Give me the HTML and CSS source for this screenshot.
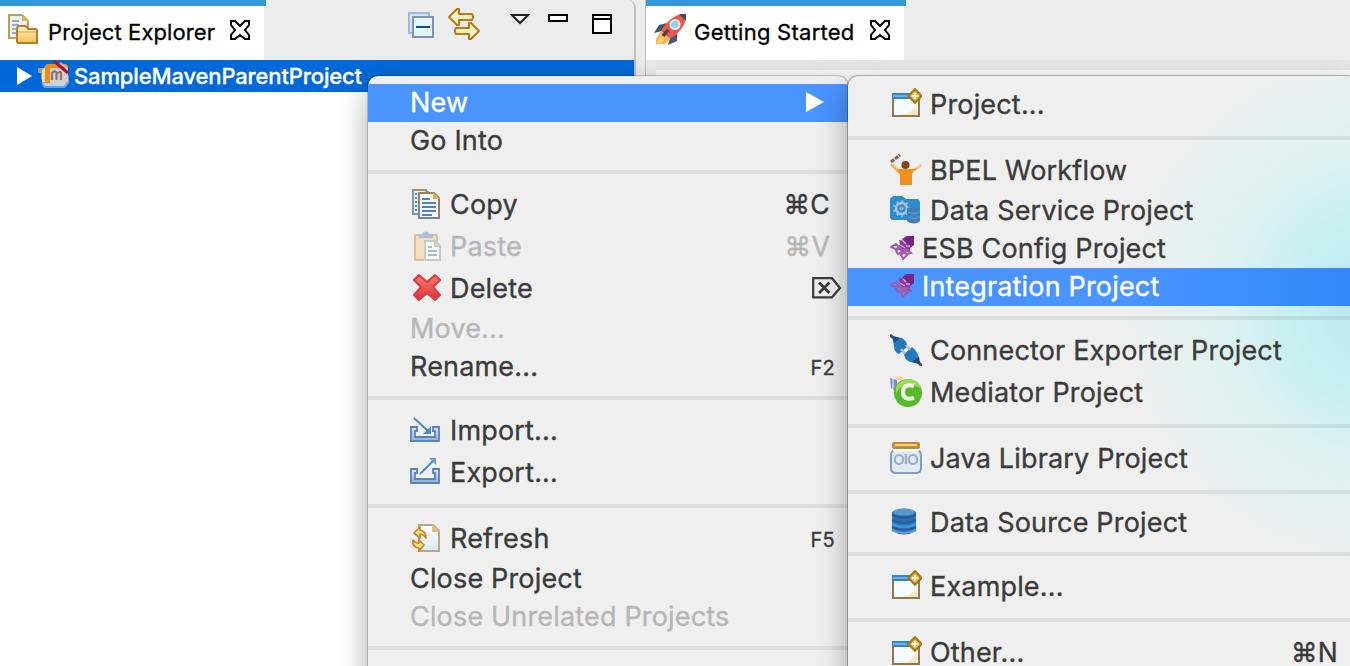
FILE: index.html
```html
<!DOCTYPE html>
<html lang="en">
<head>
<meta charset="utf-8">
<title>Project Explorer</title>
<link rel="stylesheet" href="styles.css">
</head>
<body>
<svg class="defs" width="0" height="0">
  <defs>
    <linearGradient id="gold" x1="0" y1="0" x2="0" y2="1"><stop offset="0" stop-color="#fff3c4"/><stop offset="1" stop-color="#f8c05a"/></linearGradient>
    <linearGradient id="red" x1="0" y1="0" x2="0" y2="1"><stop offset="0" stop-color="#fb7c6c"/><stop offset="1" stop-color="#e0303a"/></linearGradient>
    <linearGradient id="paper" x1="0" y1="0" x2="0" y2="1"><stop offset="0" stop-color="#fdfdfd"/><stop offset="1" stop-color="#dce9f8"/></linearGradient>
    <linearGradient id="tray" x1="0" y1="0" x2="0" y2="1"><stop offset="0" stop-color="#dfeaf6"/><stop offset="1" stop-color="#8fadd6"/></linearGradient>
    <symbol id="close" viewBox="0 0 20 20"><path d="M1 1H5L10 6L15 1H19V5L15 10L19 15V19H15L10 15L5 19H1V15L5 10L1 5Z" fill="#fff" stroke="#000" stroke-width="2"/></symbol>
    <symbol id="wizard" viewBox="0 0 32 32">
      <rect x="3" y="6" width="26" height="22" fill="#f4fbff" stroke="#8e7a50" stroke-width="2"/>
      <path d="M9 27Q25 26 27 14V27Z" fill="#fbe9bd"/>
      <path d="M2 5H23V11H2Z" fill="#3a83bd"/><path d="M3 7H20V9H3Z" fill="#69b2e4"/>
      <path d="M25 1.400L31.200 8L25 14.600L18.500 8Z" fill="#fff5c2" stroke="#a8780f" stroke-width="2.400"/>
      <path d="M25 3.500V12.500M20.500 8H29.500" stroke="#c39a35" stroke-width="3"/><path d="M25 4.500V11.500M21.500 8H28.500" stroke="#fff6cc" stroke-width="2"/>
    </symbol>
    <symbol id="esb" viewBox="0 0 24 24">
      <path d="M12 3L17 0H24V9L20 12Z" fill="#762584"/>
      <path d="M9 4L15 5L20 10V17L15 15L13 17L7 11L10 9Z" fill="#8e3a9b"/>
      <path d="M1 11L6 8L10 12L5 13ZM6 15L10 12L12 16L8 18ZM11 19L14 16L17 19L13 23ZM13 14L18 14L21 17L17 18Z" fill="none" stroke="#a45ab0" stroke-width="2"/>
      <path d="M13 5L16 8M10 9L15 12M16 10L20 10" stroke="#d4a8dc" stroke-width="1.300"/>
    </symbol>
  </defs>
</svg>

<div class="workbench">
  <section class="explorer">
    <header class="tabbar">
      <div class="tab tab-explorer">
        <svg class="i32" viewBox="0 0 32 32">
          <path d="M1 1H14L20 7V24H1Z" fill="#f0f3ec" stroke="#b6a05e" stroke-width="2"/>
          <path d="M14 1V7H20Z" fill="#dfb462"/>
          <path d="M4 7H11M4 11H11M4 15H9M4 19H9" stroke="#8fb1d2" stroke-width="2"/>
          <path d="M9 28V15Q9 12 12 12H17Q19 12 20 15H27Q29 15 29 17V29H10Z" fill="url(#gold)" stroke="#b27c2e" stroke-width="2"/>
          <path d="M10 18H28" stroke="#d9a550" stroke-width="1"/>
        </svg>
        <span class="tab-title">Project Explorer</span>
        <svg class="i20"><use href="#close"/></svg>
      </div>
      <div class="toolbar">
        <svg width="26" height="26" viewBox="0 0 26 26"><rect x="1" y="1" width="20" height="20" fill="#cfe5f3" stroke="#9fb9cf" stroke-width="2"/><rect x="5" y="5" width="20" height="20" fill="#e5f5fc" stroke="#7f93b3" stroke-width="2"/><path d="M8 15H22" stroke="#0b4b90" stroke-width="2"/></svg>
        <svg class="link" width="32" height="32" viewBox="0 0 32 32"><g fill="#fff1c2" stroke="#b87a14" stroke-width="2" stroke-linejoin="round"><path d="M1 9L9 1H11V6H24L25 8V10L24 12H11V17H9Z"/><path d="M31 23L23 15H21V20H8L7 22V24L8 26H21V31H23Z"/></g></svg>
        <svg class="view-menu" width="20" height="12" viewBox="0 0 20 12"><path d="M2 2H18L10 10Z" fill="#fff" stroke="#222" stroke-width="2"/></svg>
        <svg class="minimize" width="20" height="8" viewBox="0 0 20 8"><rect x="1" y="1" width="18" height="6" fill="#fff" stroke="#000" stroke-width="2"/></svg>
        <svg class="maximize" width="20" height="20" viewBox="0 0 20 20"><rect x="1" y="1" width="18" height="18" fill="#fff" stroke="#000" stroke-width="2"/><path d="M1 5H19" stroke="#000" stroke-width="2"/></svg>
      </div>
    </header>
    <div class="tree">
      <div class="tree-row">
        <svg class="twisty" width="15" height="18" viewBox="0 0 15 18"><path d="M0 0L15 9L0 18Z" fill="#fff"/></svg>
        <svg class="i32" viewBox="0 0 32 32">
          <path d="M0 8H8V24L3 19V13H0Z" fill="#a99a85"/>
          <path d="M3 23L8 19H27L31 15V23L27 28H6Z" fill="#6f9fe0"/><path d="M5 23H28L26 26H7Z" fill="#b9d4f5"/>
          <path d="M4 10L8 6H11V22H4Z" fill="#f6dd9c"/>
          <rect x="7" y="4" width="23" height="19" rx="3" fill="#e98b1d"/><path d="M12 8H30V20Q30 23 27 23H12Z" fill="#d8cfc9"/>
          <path d="M14 20V12M14 13Q18 9 18.500 14V20M18.500 14Q23 10 23 14V20" fill="none" stroke="#8b7378" stroke-width="2.200"/>
          <path d="M16 1L30 13" stroke="#ad1237" stroke-width="3"/><path d="M22 3L29 8" stroke="#e8b5b8" stroke-width="2"/>
        </svg>
        <span class="tree-label">SampleMavenParentProject</span>
      </div>
    </div>
  </section>
  <section class="editor">
    <header class="tabbar">
      <div class="tab tab-editor">
        <svg class="i32" viewBox="0 0 32 32">
          <path d="M0 19L5 11L13 9L8 17ZM14 31L23 27V18L16 24Z" fill="#43566f"/>
          <path d="M8 15Q17 2 27 0L32 0V5Q29 17 16 25L7 17Z" fill="#e9574e"/>
          <path d="M25 0H32V7Z" fill="#384960"/>
          <path d="M7 17L16 25L11 30L2 30L2 25Z" fill="#f7b64c"/><path d="M5 24L11 21L9 28L3 29Z" fill="#fbd173"/>
          <path d="M9 22L14 16" stroke="#563c49" stroke-width="3.500"/>
          <circle cx="21" cy="10.500" r="4.600" fill="#89d4ed" stroke="#e7e8e8" stroke-width="2"/>
        </svg>
        <span class="tab-title">Getting Started</span>
        <svg class="i20"><use href="#close"/></svg>
      </div>
    </header>
    <div class="editor-body"></div>
  </section>
</div>

<nav class="menu context-menu">
  <div class="item selected"><span class="label">New</span><svg class="arrow" width="18" height="20" viewBox="0 0 18 20"><path d="M0 0L18 10L0 20Z" fill="#fff"/></svg></div>
  <div class="item"><span class="label">Go Into</span></div>
  <div class="separator"></div>
  <div class="item tall">
    <svg class="i32" viewBox="0 0 32 32"><path d="M3 2H15L18 4V26H3Z" fill="#e4eff6" stroke="#7d9ba8" stroke-width="2"/><path d="M2 2H17" stroke="#a8935c" stroke-width="2"/><path d="M5 6H7M5 10H7M5 14H7M5 18H7M5 22H7" stroke="#5a83b8" stroke-width="2"/><path d="M9 5H24L29 10V30H9Z" fill="#f5faff" stroke="#937f58" stroke-width="2"/><path d="M9 14V30H29" fill="none" stroke="#74879a" stroke-width="2"/><path d="M23 4V11H30Z" fill="#e9ad58"/><path d="M12 11H20M12 15H26M12 19H26M12 23H26M12 27H22" stroke="#557fb8" stroke-width="2"/></svg>
    <span class="label">Copy</span><span class="key">⌘C</span></div>
  <div class="item tall disabled">
    <svg class="i32 faded" viewBox="0 0 32 32"><rect x="5" y="5" width="22" height="25" rx="1" fill="#f3d18f" stroke="#c4924b" stroke-width="2"/><path d="M9 8V4H12Q16-1 20 4H23V8Z" fill="#7390b3"/><path d="M15 11H25L30 16V30H15Z" fill="#fafcff" stroke="#9ca6b0" stroke-width="2"/><path d="M24 11V17H30Z" fill="#c1ad82"/><path d="M18 17H22M18 21H27M18 25H27" stroke="#6b86ae" stroke-width="2"/></svg>
    <span class="label">Paste</span><span class="key">⌘V</span></div>
  <div class="item tall">
    <svg class="i32" viewBox="0 0 32 32"><path d="M9 3L17 10L25 3L30 8L23 15L30 23L25 28L17 21L9 28L4 23L11 15L4 8Z" fill="url(#red)" stroke="#d53f44" stroke-width="2" stroke-linejoin="round"/></svg>
    <span class="label">Delete</span><svg class="delete-key" width="30" height="22" viewBox="0 0 30 22"><path d="M1.200 1.200H20L28 11L20 20.300H1.200Z" fill="none" stroke="#3b3b3b" stroke-width="2.200"/><path d="M7 5.500L17.500 16M17.500 5.500L7 16" stroke="#3b3b3b" stroke-width="2.800"/></svg></div>
  <div class="item disabled"><span class="label">Move...</span></div>
  <div class="item"><span class="label">Rename...</span><span class="key small">F2</span></div>
  <div class="separator"></div>
  <div class="item tall">
    <svg class="i32" viewBox="0 0 32 32"><path d="M1 13H7V17H5V23H25V17H23V13H29V27H1Z" fill="url(#tray)" stroke="#5c82b4" stroke-width="1.800"/><path d="M4 4L18 17" stroke="#4e8cba" stroke-width="2"/><path d="M21 12V20H13Z" fill="#4e8cba"/></svg>
    <span class="label">Import...</span></div>
  <div class="item tall">
    <svg class="i32" viewBox="0 0 32 32"><path d="M1 13H7V17H5V23H25V17H23V13H29V27H1Z" fill="url(#tray)" stroke="#5c82b4" stroke-width="1.800"/><path d="M10 18L23 5" stroke="#4e8cba" stroke-width="2"/><path d="M19 2H26V9Z" fill="#6b9dcb"/></svg>
    <span class="label">Export...</span></div>
  <div class="separator"></div>
  <div class="item tall">
    <svg class="i32" viewBox="0 0 32 32"><path d="M9 3H23L29 9V29H9Z" fill="url(#paper)" stroke="#b9a782" stroke-width="2"/><path d="M22 2V10H30Z" fill="#dcc08a"/><g fill="#ffe08c" stroke="#c5871f" stroke-width="1.700" stroke-linejoin="round"><path d="M4 11L10 5V8Q16 9 16 16Q13 12 10 12V16Z"/><path d="M14 23L9 29V26Q2 25 3 18Q6 22 9 21V18Z"/></g></svg>
    <span class="label">Refresh</span><span class="key small">F5</span></div>
  <div class="item"><span class="label">Close Project</span></div>
  <div class="item disabled"><span class="label">Close Unrelated Projects</span></div>
  <div class="separator"></div>
</nav>

<nav class="menu submenu">
  <div class="item tall"><svg class="i32"><use href="#wizard"/></svg><span class="label">Project...</span></div>
  <div class="separator"></div>
  <div class="item tall">
    <svg class="i32 bpel" viewBox="0 0 32 32"><path d="M1 9L10 2" stroke="#80604a" stroke-width="3" stroke-dasharray="4 1"/><path d="M1 11L10 20L20 20L31 12" fill="none" stroke="#e6a64a" stroke-width="2.500"/><path d="M2 10L9 17M26 15L31 12" stroke="#f2d5a2" stroke-width="2"/><path d="M7 16H24L22 20V33H10V20Z" fill="#f28f1b"/><circle cx="15.500" cy="12" r="4" fill="#814516"/></svg>
    <span class="label">BPEL Workflow</span></div>
  <div class="item">
    <svg class="i32" viewBox="0 0 32 32"><path d="M0 5L3 2H12L16 5H27Q30 5 30 9V26H3Q0 26 0 22Z" fill="#2f8dcb"/><circle cx="11.500" cy="14.500" r="5.500" fill="none" stroke="#a9c7df" stroke-width="2.500"/><circle cx="11.500" cy="14.500" r="7.500" fill="none" stroke="#a9c7df" stroke-width="1.500" stroke-dasharray="2 3"/><circle cx="11.500" cy="14.500" r="2" fill="#8fb5d6"/><path d="M17 14Q24 11 30 14V27Q24 32 17 27Z" fill="#3d7fbe"/><path d="M18 18Q24 21 30 18M18 23Q24 26 30 23" fill="none" stroke="#5a9ccf" stroke-width="1.300"/></svg>
    <span class="label">Data Service Project</span></div>
  <div class="item"><svg class="i24"><use href="#esb"/></svg><span class="label">ESB Config Project</span></div>
  <div class="item selected tinted"><svg class="i24"><use href="#esb"/></svg><span class="label">Integration Project</span></div>
  <div class="separator"></div>
  <div class="item tall">
    <svg class="i32" viewBox="0 0 32 32"><path d="M0 1L5 5M27 27L32 32" stroke="#4d535b" stroke-width="3"/><path d="M2 2L12 4Q18 8 17 13L9 20Q4 18 4 12Z" fill="#2379ba"/><path d="M2 2L9 4L5 9Z" fill="#25437a"/><path d="M14 20L22 13Q29 18 30 30L20 28Q14 25 14 20Z" fill="#2379ba"/><path d="M30 30L22 28L29 23Z" fill="#25437a"/><path d="M11 15L15 20M16 11L20 16" stroke="#b9babb" stroke-width="2.500"/></svg>
    <span class="label">Connector Exporter Project</span></div>
  <div class="item tall">
    <svg class="i32" viewBox="0 0 32 32"><path d="M4 2L10 0L15 2L9 4Z" fill="#fbd28d"/><path d="M0 2L7 4V16L1 12Z" fill="#7c91c4"/><path d="M3 3V13" stroke="#b6c3e3" stroke-width="2"/><circle cx="18" cy="17" r="14" fill="#58b82c"/><path d="M6 11Q12 1 24 4Q31 8 31 13Q24 7 17 9Q9 10 6 18Z" fill="#9adc55"/><path d="M24 10Q13 7 13 16Q13 25 24 22" fill="none" stroke="#f2fae9" stroke-width="4"/></svg>
    <span class="label">Mediator Project</span></div>
  <div class="separator"></div>
  <div class="item tall">
    <svg class="i32" viewBox="0 0 32 32"><path d="M4 8Q1 10 1 14V26Q1 31 6 31H26Q31 31 31 26V14Q31 10 28 8Z" fill="#e1e9f3" stroke="#829dc4" stroke-width="2"/><rect x="2" y="0" width="28" height="7" rx="2" fill="#c58a2c"/><path d="M5 3H27" stroke="#f5d681" stroke-width="2"/><path d="M3 8H29" stroke="#fff" stroke-width="2"/><rect x="5" y="13" width="8" height="9" rx="4" fill="none" stroke="#9bafca" stroke-width="2.200"/><path d="M16 12V22" stroke="#9bafca" stroke-width="2.500"/><rect x="19" y="13" width="8" height="9" rx="4" fill="none" stroke="#9bafca" stroke-width="2.200"/></svg>
    <span class="label">Java Library Project</span></div>
  <div class="separator"></div>
  <div class="item">
    <svg class="i32 db" viewBox="0 0 32 32"><path d="M2 6Q14-1 26 6V25Q14 32 2 25Z" fill="#2f70b3"/><ellipse cx="14" cy="6" rx="11" ry="3.500" fill="#5b96d2"/><path d="M2 18Q14 24 26 18" fill="none" stroke="#2f9ae0" stroke-width="3"/><path d="M2 24Q14 30 26 24" fill="none" stroke="#5b97cf" stroke-width="2.500"/><path d="M2 9Q14 15 26 9M2 14Q14 20 26 14M2 21Q14 27 26 21" fill="none" stroke="#235b98" stroke-width="1.500"/></svg>
    <span class="label">Data Source Project</span></div>
  <div class="separator"></div>
  <div class="item tall"><svg class="i32"><use href="#wizard"/></svg><span class="label">Example...</span></div>
  <div class="separator"></div>
  <div class="item tall"><svg class="i32"><use href="#wizard"/></svg><span class="label">Other...</span><span class="key">⌘N</span></div>
</nav>
</body>
</html>
```
FILE: styles.css
```css
* { box-sizing: border-box; }
html, body { margin: 0; height: 666px; overflow: hidden; }
body { position: relative; width: 1350px; background: #ececec; font-family: Inter, "Liberation Sans", sans-serif; color: #3b3b3b; }
svg { display: block; flex: none; }
.defs { position: absolute; }
.i32 { width: 32px; height: 32px; }
.i24 { width: 24px; height: 24px; }
.i20 { width: 20px; height: 20px; }

.workbench { display: flex; gap: 9px; height: 666px; }
.explorer { width: 636px; border-right: 2px solid #bebebe; border-top-right-radius: 8px; }
.editor { flex: 1; border-left: 1px solid #bebebe; }
.tabbar { display: flex; height: 60px; }
.tab { display: flex; align-items: center; height: 60px; padding: 0 0 0 8px; background: linear-gradient(#3498db, #3498db) 0 0 / 100% 6px no-repeat, linear-gradient(#fff, #fff) 0 0 / calc(100% - 2px) 100% no-repeat; color: #000; }
.tab-explorer { width: 266px; }
.tab-editor { width: 260px; }
.tab-title { font-size: 22px; letter-spacing: 0.1px; white-space: nowrap; width: 168px; margin: 4px 14px 0 8px; -webkit-text-stroke: 0.3px currentColor; }
.tab-editor .tab-title { width: 161px; letter-spacing: 0.25px; margin-right: 15px; }
.tab .i20 { margin-top: 0; }
.toolbar { display: flex; padding-left: 142px; }
.toolbar svg { margin-top: 12px; }
.toolbar .link { margin: 8px 0 0 14px; }
.toolbar .view-menu { margin: 13px 0 0 30px; }
.toolbar .minimize { margin: 14px 0 0 18px; }
.toolbar .maximize { margin: 14px 0 0 24px; }
.tree { height: 606px; background: #fff; }
.tree-row { display: flex; align-items: center; height: 32px; padding-left: 17px; background: #0069d9; color: #fff; }
.tree-row .i32 { margin: 0 4px 0 6px; }
.tree-label { font-size: 22px; font-weight: 500; letter-spacing: -0.14px; white-space: nowrap; -webkit-text-stroke: 0.3px currentColor; }
.editor-body { height: 606px; margin-left: 10px; border-top: 10px solid #e6e6e6; background: #f8f8f8; }

.menu { position: absolute; top: 76px; padding-top: 8px; background-color: #efefef; border-radius: 10px; }
.context-menu { left: 368px; width: 480px; height: 620px; box-shadow: 0 0 0 1px rgba(0,0,0,.2), 0 12px 30px rgba(0,0,0,.34); overflow: hidden; }
.submenu { left: 848px; width: 508px; height: 620px; background-image: radial-gradient(circle 255px at 530px 232px, #b7e7ee 0, #c5eff2 80px, #dcf1ef 155px, #efefef 255px); box-shadow: 0 0 0 1px rgba(0,0,0,.28), 0 12px 30px rgba(0,0,0,.34); }
.item { display: flex; align-items: center; gap: 8px; height: 38px; padding-left: 42px; white-space: nowrap; }
.tall { height: 42px; }
.label { font-size: 27px; line-height: 32px; letter-spacing: 0.17px; -webkit-text-stroke: 0.35px currentColor; }
.item .i24 { margin-top: -2px; }
.item .i32 { margin-top: -2px; }
.item .bpel { margin-top: -5px; }
.item .db { margin-top: -2px; }
.selected { background: #4a94ff; color: #fff; }
.tinted { background: linear-gradient(90deg, #4a94ff 55%, #3d8dfd 80%, #3286f9 100%); }
.disabled { color: #b6b6b6; }
.faded { opacity: .5; }
.key { margin: -3px 0 0 auto; padding-right: 18px; font-size: 26.5px; letter-spacing: 0.3px; -webkit-text-stroke: 0.35px currentColor; }
.key.small { margin-top: 0; font-size: 20px; padding: 2px 13px 0 0; }
.arrow { margin: -2px 24px 0 auto; }
.delete-key { margin: -2px 6px 0 auto; }
.separator { height: 24px; background: linear-gradient(rgba(0,0,0,.07), rgba(0,0,0,.07)) 0 10px / 100% 4px no-repeat; }
```
